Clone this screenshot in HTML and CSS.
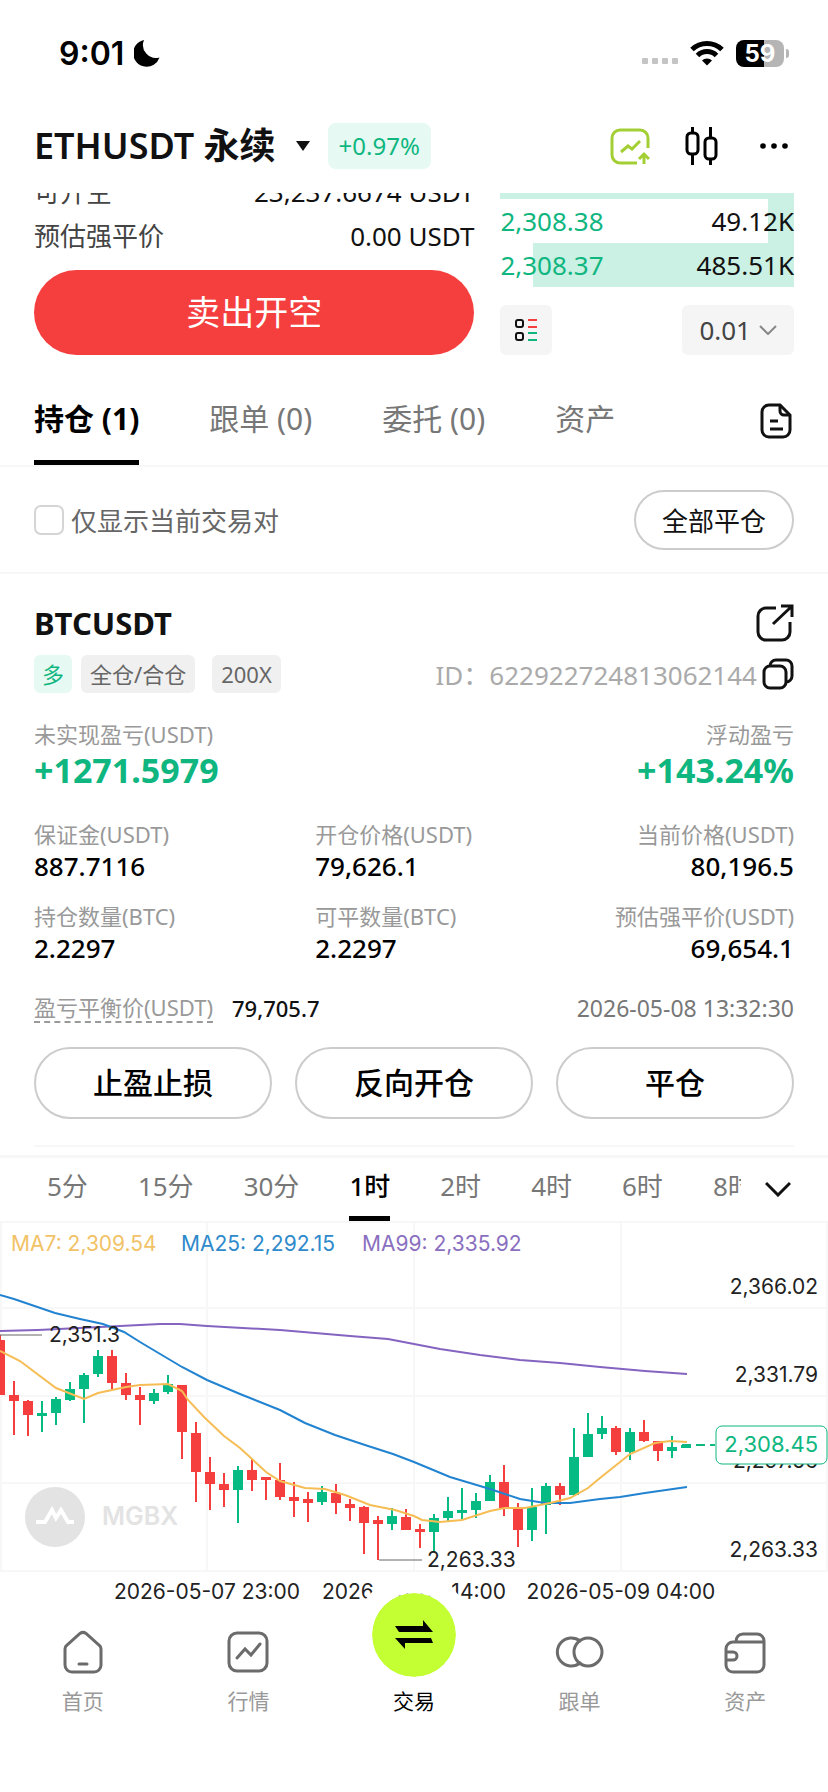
FILE: index.html
```
<!DOCTYPE html>
<html lang="zh-CN">
<head>
    <meta charset="UTF-8">
    <meta name="viewport" content="width=device-width, initial-scale=1.0">
    <title>ETHUSDT 永续</title>
    <link rel="stylesheet" href="styles.css">
</head>
<body>
    <div class="status-bar">
        <div class="status-left">
            <span class="clock">9:01</span>
            <svg width="26" height="28" viewBox="0 0 26 28"><path d="M10 1A13.500 13.500 0 1 0 25.500 18.500A13 13 0 0 1 10 1Z" fill="#000"/></svg>
        </div>
        <div class="status-right">
            <svg class="signal" width="36" height="6" viewBox="0 0 36 6" fill="#c4c4c4"><rect width="6" height="6" rx="1"/><rect x="10" width="6" height="6" rx="1"/><rect x="20" width="6" height="6" rx="1"/><rect x="30" width="6" height="6" rx="1"/></svg>
            <svg width="34" height="26" viewBox="0 0 34 26" fill="none" stroke="#000" stroke-width="5">
                <path d="M2 9.500a21.500 21.500 0 0 1 30 0"/>
                <path d="M7.500 15.500a13.500 13.500 0 0 1 19 0"/>
                <path d="M17 25.500l-5-5a7 7 0 0 1 10 0z" fill="#000" stroke="none"/>
            </svg>
            <div class="battery"><span>59</span></div>
        </div>
    </div>

    <header class="header">
        <h1>ETHUSDT 永续</h1>
        <svg class="caret" width="14" height="10" viewBox="0 0 14 10"><path d="M0 0h14L7 10z" fill="#111"/></svg>
        <span class="change">+0.97%</span>
        <div class="header-icons">
            <button aria-label="行情提醒">
                <svg width="40" height="40" viewBox="0 0 40 40" fill="none" stroke="#a3cf35" stroke-width="3">
                    <path d="M27 37H10a8 8 0 0 1-8-8V12a8 8 0 0 1 8-8h20a8 8 0 0 1 8 8v10"/>
                    <path d="M11 26l7-6 4 3 8-8"/>
                    <path d="M34 38V28m-5 5l5-5 5 5"/>
                </svg>
            </button>
            <button aria-label="K线">
                <svg width="34" height="40" viewBox="0 0 34 40" fill="none" stroke="#000" stroke-width="3">
                    <rect x="3" y="7" width="11" height="21" rx="4"/>
                    <rect x="21" y="12" width="11" height="21" rx="4"/>
                    <path d="M8.500 1v6m0 21v11M26.500 1v11m0 21v6"/>
                </svg>
            </button>
            <button aria-label="更多">
                <svg width="28" height="6" viewBox="0 0 28 6"><circle cx="3" cy="3" r="2.800"/><circle cx="14" cy="3" r="2.800"/><circle cx="25" cy="3" r="2.800"/></svg>
            </button>
        </div>
    </header>

    <section class="order">
        <div class="order-form">
            <div class="order-row"><span class="order-label">可开空</span><span>23,237.6674 USDT</span></div>
            <div class="order-row"><span class="order-label">预估强平价</span><span>0.00 USDT</span></div>
            <button class="sell-btn">卖出开空</button>
        </div>
        <div class="order-book">
            <div class="book-row"><div class="depth" style="width: 100%"></div></div>
            <div class="book-row"><div class="depth" style="width: 9%"></div><span class="price">2,308.38</span><span>49.12K</span></div>
            <div class="book-row"><div class="depth" style="width: 89%"></div><span class="price">2,308.37</span><span>485.51K</span></div>
            <div class="book-tools">
                <button class="book-mode" aria-label="盘口样式">
                    <svg width="24" height="24" viewBox="0 0 24 24" fill="none" stroke-width="2">
                        <rect x="2" y="2" width="7" height="7" rx="2" stroke="#111"/>
                        <rect x="2" y="15" width="7" height="7" rx="2" stroke="#111"/>
                        <path d="M14 2h9M14 9h9" stroke="#f53f3f"/>
                        <path d="M14 15h9M14 22h9" stroke="#0fb67f"/>
                    </svg>
                </button>
                <button class="book-step">0.01
                    <svg width="18" height="10" viewBox="0 0 18 10" fill="none" stroke="#888" stroke-width="2"><path d="M1 1l8 8 8-8"/></svg>
                </button>
            </div>
        </div>
    </section>

    <nav class="tabs">
        <a href="#" class="active">持仓 (1)</a>
        <a href="#">跟单 (0)</a>
        <a href="#">委托 (0)</a>
        <a href="#">资产</a>
        <button class="history" aria-label="历史记录">
            <svg width="32" height="36" viewBox="0 0 32 36" fill="none" stroke="#111" stroke-width="3">
                <path d="M20 2H9a7 7 0 0 0-7 7v18a7 7 0 0 0 7 7h14a7 7 0 0 0 7-7V12z"/>
                <path d="M20 2v6a4 4 0 0 0 4 4h6M10 18h8M10 26h13"/>
            </svg>
        </button>
    </nav>

    <div class="filter">
        <input type="checkbox" id="only-current">
        <label for="only-current">仅显示当前交易对</label>
        <button class="close-all">全部平仓</button>
    </div>

    <main class="position">
        <div class="position-title">
            <h2>BTCUSDT</h2>
            <button aria-label="分享">
                <svg width="38" height="38" viewBox="0 0 38 38" fill="none" stroke="#111" stroke-width="3">
                    <path d="M20 4H10a8 8 0 0 0-8 8v16a8 8 0 0 0 8 8h16a8 8 0 0 0 8-8V18"/>
                    <path d="M17 20L35 3M25 2h11v11"/>
                </svg>
            </button>
        </div>
        <div class="tags">
            <span class="tag long">多</span>
            <span class="tag">全仓/合仓</span>
            <span class="tag lever">200X</span>
            <span class="order-id">ID：622922724813062144</span>
            <button aria-label="复制">
                <svg width="32" height="32" viewBox="0 0 32 32" fill="none" stroke="#111" stroke-width="3">
                    <rect x="2" y="8" width="22" height="22" rx="6"/>
                    <path d="M8 8a6 6 0 0 1 6-6h10a6 6 0 0 1 6 6v10a6 6 0 0 1-6 6"/>
                </svg>
            </button>
        </div>

        <div class="profit">
            <div><div class="label">未实现盈亏(USDT)</div><div class="profit-value">+1271.5979</div></div>
            <div class="right"><div class="label">浮动盈亏</div><div class="profit-value">+143.24%</div></div>
        </div>

        <div class="stats">
            <div><div class="label">保证金(USDT)</div><div class="value">887.7116</div></div>
            <div><div class="label">开仓价格(USDT)</div><div class="value">79,626.1</div></div>
            <div class="right"><div class="label">当前价格(USDT)</div><div class="value">80,196.5</div></div>
            <div><div class="label">持仓数量(BTC)</div><div class="value">2.2297</div></div>
            <div><div class="label">可平数量(BTC)</div><div class="value">2.2297</div></div>
            <div class="right"><div class="label">预估强平价(USDT)</div><div class="value">69,654.1</div></div>
        </div>

        <div class="break-even">
            <span class="label dashed">盈亏平衡价(USDT)</span>
            <span class="break-value">79,705.7</span>
            <time>2026-05-08 13:32:30</time>
        </div>

        <div class="actions">
            <button>止盈止损</button>
            <button>反向开仓</button>
            <button>平仓</button>
        </div>
    </main>

    <div class="periods">
        <div class="period-list">
            <button>5分</button>
            <button>15分</button>
            <button>30分</button>
            <button class="active">1时</button>
            <button>2时</button>
            <button>4时</button>
            <button>6时</button>
            <button>8时</button>
        </div>
        <button class="more" aria-label="更多周期">
            <svg width="26" height="16" viewBox="0 0 26 16" fill="none" stroke="#111" stroke-width="3"><path d="M1 2l12 12L25 2"/></svg>
        </button>
    </div>

    <svg class="chart" viewBox="0 0 828 390">
        <path class="grid" d="M0 1H828M0 87H828M0 175H828M0 262H828M0 350H828M1 0V350M207 0V350M414 0V350M621 0V350M827 0V350"/>
        <g class="watermark">
            <circle cx="55" cy="296" r="30"/>
            <path d="M36 301h9l7-12 4 8 5-8 7 12h6"/>
            <text x="102" y="304">MGBX</text>
        </g>
        <g id="candles"></g>
        <polyline class="ma99" points="0,110 38,109 100,106 160,103 180,103 207,105 280,109 350,115 388,118 414,123 440,128 480,134 520,139 560,142 600,146 645,150 687,153"/>
        <polyline class="ma25" points="0,74 14,78 55,92 80,98 103,103 124,111 140,121 182,146 207,159 240,173 280,189 305,202 335,214 365,224 393,233 414,241 450,256 490,268 505,273 520,278 545,282 570,282 600,278 620,276 645,272 687,266"/>
        <polyline class="ma7" points="0,130 20,140 56,167 84,178 98,172 126,166 140,164 168,163 182,170 188,179 204,196 224,215 240,227 252,238 266,251 280,260 305,267 325,268 345,274 370,284 395,289 414,295 422,299 440,301 462,299 490,290 505,287 525,287 550,282 570,277 588,267 600,257 630,233 655,222 670,220 687,221"/>
        <path class="leader" d="M0 114H42M379 339H422"/>
        <path class="last-line" d="M682 224H715"/>
        <g>
            <text class="c7" x="11" y="30">MA7: 2,309.54</text>
            <text class="c25" x="181" y="30">MA25: 2,292.15</text>
            <text class="c99" x="362" y="30">MA99: 2,335.92</text>
        </g>
        <g class="axis">
            <text x="49" y="121">2,351.3</text>
            <text x="427" y="346">2,263.33</text>
            <g text-anchor="end">
                <text x="818" y="73">2,366.02</text>
                <text x="818" y="161">2,331.79</text>
                <text x="818" y="247">2,297.56</text>
                <text x="818" y="336">2,263.33</text>
            </g>
            <g text-anchor="middle">
                <text x="207" y="378">2026-05-07 23:00</text>
                <text x="414" y="378">2026-05-08 14:00</text>
                <text x="621" y="378">2026-05-09 04:00</text>
            </g>
        </g>
        <rect class="last-box" x="716" y="205" width="111" height="38" rx="6"/>
        <text class="last-price" x="818" y="231" text-anchor="end">2,308.45</text>
    </svg>

    <nav class="bottom-nav">
        <a href="#">
            <svg width="44" height="44" viewBox="0 0 44 44"><path d="M4 19a5 5 0 0 1 2-4L19 3.500a5 5 0 0 1 6 0L38 15a5 5 0 0 1 2 4v16a7 7 0 0 1-7 7H11a7 7 0 0 1-7-7zM18 34h8"/></svg>
            <span>首页</span>
        </a>
        <a href="#">
            <svg width="44" height="44" viewBox="0 0 44 44"><rect x="3" y="3" width="38" height="38" rx="8"/><path d="M11 28l8-9 6 6 9-11"/></svg>
            <span>行情</span>
        </a>
        <a href="#" class="active">
            <div class="trade-circle">
                <svg width="38" height="30" viewBox="0 0 38 30"><path d="M0 6h28V0l10 12H4zM38 23H10v6L0 18h36z"/></svg>
            </div>
            <span>交易</span>
        </a>
        <a href="#">
            <svg width="50" height="44" viewBox="0 0 50 44"><circle cx="33" cy="22" r="14"/><path d="M25 11a14 14 0 1 0 0 22"/></svg>
            <span>跟单</span>
        </a>
        <a href="#">
            <svg width="44" height="44" viewBox="0 0 44 44"><path d="M41 12H10a7 7 0 0 0-7 7v16a7 7 0 0 0 7 7h24a7 7 0 0 0 7-7zM41 12v-1a7 7 0 0 0-7-7H20c-4 0-7 3-7 8M3 22h7a4 4 0 0 1 0 8H3"/></svg>
            <span>资产</span>
        </a>
    </nav>
    <script src="chart.js"></script>
</body>
</html>
```

FILE: styles.css
```
* {
    box-sizing: border-box;
}
body {
    margin: 0;
    min-height: 100vh;
    display: flex;
    flex-direction: column;
    font-family: "Noto Sans", "Noto Sans CJK SC", sans-serif;
    font-size: 26px;
    color: #111;
    background-color: #fff;
}
h1, h2 {
    margin: 0;
}
a {
    color: inherit;
    text-decoration: none;
}
button {
    padding: 0;
    border: none;
    background: none;
    font: inherit;
    color: inherit;
    cursor: pointer;
}
svg {
    display: block;
}

/* status bar */
.status-bar {
    height: 106px;
    padding: 0 40px 0 59px;
    display: flex;
    align-items: center;
    justify-content: space-between;
    font-family: Inter, sans-serif;
}
.status-left, .status-right {
    display: flex;
    align-items: center;
}
.status-left {
    gap: 10px;
}
.status-right {
    gap: 12px;
}
.clock {
    font-size: 32px;
    font-weight: 600;
    color: #000;
}
.signal {
    margin-top: 16px;
}
.battery {
    position: relative;
    width: 48px;
    height: 27px;
    margin-right: 4px;
    border-radius: 8px;
    background: linear-gradient(to right, #000 59%, #b5b5b5 59%);
    color: #fff;
    font-size: 24px;
    font-weight: 700;
    line-height: 27px;
    text-align: center;
}
.battery::after {
    content: "";
    position: absolute;
    right: -5px;
    top: 9px;
    width: 3px;
    height: 9px;
    border-radius: 0 3px 3px 0;
    background-color: #b5b5b5;
}

/* header */
.header {
    height: 79px;
    margin-bottom: 8px;
    padding: 0 34px;
    display: flex;
    align-items: center;
}
.header h1 {
    padding-bottom: 4px;
    font-size: 36px;
    font-weight: 600;
}
.caret {
    margin: 0 18px 0 20px;
}
.change {
    padding: 0 11px;
    border-radius: 8px;
    background-color: #e6f9f3;
    color: #0fb67f;
    font-size: 24px;
    line-height: 46px;
}
.header-icons {
    margin-left: auto;
    padding-right: 6px;
    display: flex;
    align-items: center;
    gap: 34px;
}
.header-icons button:last-child {
    margin-left: 8px;
}

/* order area, scrolled under the header */
.order {
    height: 162px;
    padding: 0 34px;
    display: flex;
    gap: 26px;
    align-items: flex-end;
    overflow: hidden;
}
.order-form {
    flex: 3;
}
.order-row {
    display: flex;
    justify-content: space-between;
    line-height: 44px;
}
.order-label {
    color: #444;
}
.sell-btn {
    width: 100%;
    height: 85px;
    margin-top: 12px;
    padding-bottom: 4px;
    border-radius: 43px;
    background-color: #f53f3f;
    color: #fff;
    font-size: 34px;
}
.order-book {
    flex: 2;
}
.book-row {
    position: relative;
    height: 44px;
    display: flex;
    justify-content: space-between;
    line-height: 44px;
}
.book-row span {
    position: relative;
}
.depth {
    position: absolute;
    top: 0;
    right: 0;
    height: 100%;
    background-color: #cbf0e4;
}
.price {
    color: #0fb67f;
}
.book-tools {
    margin-top: 18px;
    display: flex;
    justify-content: space-between;
}
.book-tools button {
    height: 50px;
    border-radius: 6px;
    background-color: #f5f5f5;
}
.book-mode {
    padding: 0 14px;
}
.book-step {
    padding: 0 17px;
    display: flex;
    align-items: center;
    gap: 8px;
    color: #444;
}

/* tabs */
.tabs {
    margin-top: 18px;
    padding: 0 34px;
    display: flex;
    gap: 70px;
    border-bottom: 2px solid #f7f7f7;
    font-size: 30px;
    color: #777;
}
.tabs a {
    padding: 5px 0;
    line-height: 82px;
}
.tabs .active {
    padding-bottom: 0;
    border-bottom: 5px solid #000;
    color: #000;
    font-weight: 700;
}
.history {
    margin-left: auto;
    padding: 4px 2px 0 0;
}

/* filter */
.filter {
    height: 107px;
    padding: 0 34px;
    display: flex;
    align-items: center;
    border-bottom: 2px solid #f7f7f7;
}
.filter input {
    appearance: none;
    width: 30px;
    height: 30px;
    margin: 0 7px 0 0;
    border: 2px solid #d5d5d5;
    border-radius: 7px;
}
.filter label {
    color: #666;
}
.close-all {
    height: 60px;
    margin-left: auto;
    padding: 0 26px;
    border: 2px solid #ccc;
    border-radius: 30px;
}

/* position */
.position {
    margin: 0 34px;
    padding: 24px 0 26px;
    border-bottom: 2px solid #f7f7f7;
}
.position-title {
    height: 50px;
    display: flex;
    align-items: center;
    justify-content: space-between;
}
.position-title h2 {
    font-size: 31px;
    font-weight: 700;
}
.tags {
    height: 38px;
    margin: 7px 0 26px;
    display: flex;
    align-items: center;
}
.tag {
    margin-right: 9px;
    padding: 0 9px;
    border-radius: 6px;
    background-color: #f0f0f0;
    color: #666;
    font-size: 22px;
    line-height: 38px;
}
.tag.long {
    padding: 0 8px;
    background-color: #e6f9f3;
    color: #0fb67f;
}
.tag.lever {
    margin-left: 8px;
}
.order-id {
    margin: 0 5px 0 auto;
    color: #aaa;
}
.label {
    font-size: 22px;
    line-height: 30px;
    color: #999;
}
.right {
    text-align: right;
}
.profit {
    display: flex;
    justify-content: space-between;
}
.profit-value {
    font-size: 34px;
    font-weight: 700;
    line-height: 42px;
    color: #0fb67f;
}
.stats {
    margin-top: 28px;
    display: grid;
    grid-template-columns: 37% 1fr 1fr;
    row-gap: 18px;
}
.value {
    font-weight: 500;
    line-height: 34px;
    color: #000;
}
.break-even {
    margin-top: 28px;
    display: flex;
    align-items: center;
    line-height: 30px;
}
.dashed {
    line-height: 28px;
    border-bottom: 2px dashed #999;
}
.break-value {
    margin-left: 19px;
    font-size: 22px;
    font-weight: 500;
}
.break-even time {
    margin-left: auto;
    font-size: 23px;
    color: #777;
}
.actions {
    margin-top: 24px;
    display: flex;
    gap: 23px;
}
.actions button {
    flex: 1;
    height: 72px;
    padding-bottom: 4px;
    border: 2px solid #ccc;
    border-radius: 36px;
    font-size: 30px;
    font-weight: 500;
    color: #000;
}

/* chart periods */
.periods {
    margin-top: 8px;
    padding: 0 37px 0 47px;
    border-top: 3px solid #f7f7f7;
    display: flex;
    align-items: flex-start;
    gap: 24px;
}
.period-list {
    flex: 1;
    min-width: 0;
    display: flex;
    gap: 50px;
    overflow: hidden;
}
.period-list button {
    height: 63px;
    padding-bottom: 9px;
    color: #777;
    white-space: nowrap;
}
.period-list .active {
    padding-bottom: 4px;
    border-bottom: 5px solid #000;
    color: #000;
    font-weight: 500;
}
.more {
    margin-top: 23px;
}

/* chart */
.chart {
    width: 100%;
    font-family: Inter, sans-serif;
    font-size: 21px;
}
.grid {
    fill: none;
    stroke: #f7f7f7;
    stroke-width: 2;
}
.watermark {
    fill: #e3e3e3;
    font-size: 25px;
    font-weight: 600;
}
.watermark path {
    fill: none;
    stroke: #fff;
    stroke-width: 4;
}
.up {
    fill: #06bb83;
}
.down {
    fill: #f53f3f;
}
polyline {
    fill: none;
    stroke-width: 2;
}
.ma7 {
    stroke: #f7bd55;
}
.ma25 {
    stroke: #2283d0;
}
.ma99 {
    stroke: #8464c0;
}
.c7 {
    fill: #f2c266;
}
.c25 {
    fill: #2e8acb;
}
.c99 {
    fill: #8a6fc0;
}
.leader {
    stroke: #666;
}
.axis {
    fill: #222;
}
.last-line {
    stroke: #0fb67f;
    stroke-width: 2;
    stroke-dasharray: 9 5;
}
.last-box {
    fill: #fff;
    stroke: #0fb67f;
    stroke-width: 1;
}
.last-price {
    fill: #0fb67f;
    font-size: 22px;
}

/* bottom nav */
.bottom-nav {
    flex: 1;
    padding-top: 19px;
    display: flex;
    color: #999;
    background-color: #fff;
}
.bottom-nav a {
    position: relative;
    flex: 1;
    display: flex;
    flex-direction: column;
    align-items: center;
    gap: 12px;
    font-size: 21px;
    line-height: 30px;
}
.bottom-nav a > svg {
    fill: none;
    stroke: #6b6b6b;
    stroke-width: 3;
    stroke-linecap: round;
}
.bottom-nav .active {
    padding-top: 56px;
    color: #000;
}
.bottom-nav span {
    position: relative;
}
/* round button that overlaps the chart */
.trade-circle {
    position: absolute;
    top: -55px;
    width: 120px;
    height: 120px;
    border: 18px solid #fff;
    border-radius: 50%;
    background-color: #c3ff33;
    background-clip: padding-box;
    display: flex;
    align-items: center;
    justify-content: center;
}
```

FILE: chart.js
```
// high, body top, body bottom, low (y inside the chart), rising
const candles = [
    [114, 119, 174, 174, 0], [160, 174, 180, 214, 0], [179, 180, 194, 215, 0], [180, 192, 195, 211, 1],
    [176, 178, 192, 204, 1], [161, 168, 179, 180, 1], [152, 154, 168, 202, 1], [129, 135, 153, 156, 1],
    [129, 135, 162, 168, 0], [152, 162, 174, 179, 0], [166, 174, 179, 204, 0], [168, 172, 180, 183, 1],
    [154, 163, 171, 173, 1], [164, 164, 211, 238, 0], [201, 212, 251, 281, 0], [236, 251, 263, 289, 0],
    [252, 263, 269, 286, 0], [245, 249, 269, 302, 1], [238, 249, 259, 270, 0], [256, 256, 259, 279, 0],
    [242, 259, 276, 279, 0], [261, 276, 280, 296, 0], [271, 278, 282, 301, 0], [265, 271, 281, 284, 1],
    [263, 272, 282, 293, 0], [278, 283, 287, 300, 0], [285, 286, 302, 333, 0], [295, 299, 303, 339, 0],
    [287, 295, 303, 309, 1], [288, 296, 309, 309, 0], [303, 308, 311, 327, 0], [293, 297, 311, 331, 1],
    [276, 290, 297, 301, 1], [267, 289, 292, 298, 1], [272, 280, 289, 297, 1], [254, 261, 280, 280, 1],
    [244, 261, 287, 295, 0], [282, 287, 309, 326, 0], [267, 286, 309, 320, 1], [262, 265, 284, 313, 1],
    [262, 265, 274, 284, 0], [207, 236, 274, 275, 1], [192, 213, 236, 236, 1], [195, 207, 213, 218, 1],
    [205, 207, 231, 234, 0], [207, 211, 231, 239, 1], [199, 211, 220, 221, 0], [220, 220, 230, 240, 0],
    [215, 226, 230, 237, 1], [224, 224, 227, 227, 1]
];

const group = document.getElementById('candles');

function addRect(x, y, width, height, cls) {
    const rect = document.createElementNS('http://www.w3.org/2000/svg', 'rect');
    rect.setAttribute('x', x);
    rect.setAttribute('y', y);
    rect.setAttribute('width', width);
    rect.setAttribute('height', height);
    rect.setAttribute('class', cls);
    group.appendChild(rect);
}

candles.forEach(([high, top, bottom, low, rising], i) => {
    const x = i * 14;
    const cls = rising ? 'up' : 'down';
    addRect(x - 1, high, 2, low - high, cls);
    addRect(x - 5, top, 10, bottom - top, cls);
});
```
